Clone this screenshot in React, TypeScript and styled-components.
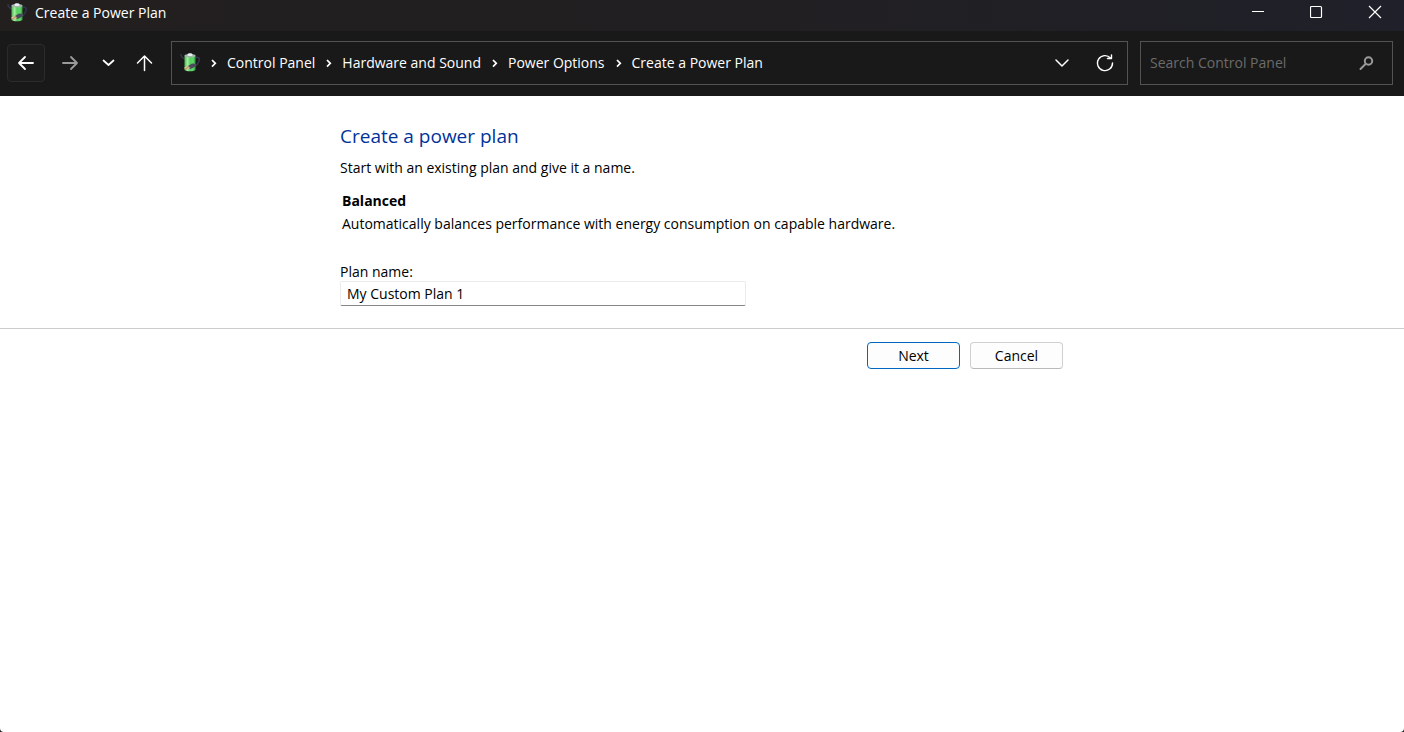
import React, { useState } from "react";
import styled, { createGlobalStyle } from "styled-components";

const GlobalStyle = createGlobalStyle`
  *, *::before, *::after { box-sizing: border-box; }
  html, body, #root { height: 100%; }
  body {
    margin: 0;
    background: #1b1b1b;
    color: #000000;
    font: 14px/20px "Open Sans", "Noto Sans", sans-serif;
  }
  button, input { font: inherit; color: inherit; }
`;

const Window = styled.div`
  display: flex;
  flex-direction: column;
  min-height: 100%;
  border-radius: 0 0 4px 4px;
  background: #ffffff;
`;

const TitleBar = styled.header`
  display: flex;
  justify-content: space-between;
  height: 31px;
  background: linear-gradient(90deg, #231f1f 0%, #211f21 50%, #1f2029 100%);
  color: #ffffff;
`;

const WindowTitle = styled.div`
  display: flex;
  align-items: center;
  gap: 8px;
  height: 26px;
  padding-left: 7px;
`;

const WindowControls = styled.div`
  display: flex;
`;

const CaptionButton = styled.button`
  display: flex;
  justify-content: center;
  width: 58px;
  height: 31px;
  padding: 5px 0 0;
  border: 0;
  background: transparent;
`;

const Toolbar = styled.div`
  display: flex;
  align-items: center;
  height: 65px;
  padding: 0 11px 2px 7px;
  background: #191919;
  color: #ffffff;
`;

const NavButtons = styled.nav`
  display: flex;
  align-items: center;
  width: 164px;
  flex: none;
`;

const NavButton = styled.button<{ $width: number; $framed?: boolean; $dim?: boolean }>`
  display: flex;
  align-items: center;
  justify-content: center;
  width: ${(p) => p.$width}px;
  height: 38px;
  padding: 0;
  border: 1px solid ${(p) => (p.$framed ? "#2b2b2b" : "transparent")};
  border-radius: 4px;
  background: ${(p) => (p.$framed ? "#1c1c1c" : "transparent")};
  color: ${(p) => (p.$dim ? "#9a9a9a" : "#ffffff")};
`;

const AddressBar = styled.div`
  display: flex;
  flex: 1;
  align-items: center;
  min-width: 0;
  height: 44px;
  padding: 0 1px 0 8px;
  border: 1px solid #535353;
`;

const Crumbs = styled.ol`
  display: flex;
  flex: 1;
  align-items: center;
  margin: 0;
  padding: 0;
  list-style: none;
  white-space: nowrap;
`;

const Crumb = styled.li`
  display: flex;
  align-items: center;
`;

const CrumbLink = styled.a`
  color: #ffffff;
  text-decoration: none;
`;

const CrumbArrow = styled.svg`
  width: 27px;
  height: 12px;
  flex: none;
`;

const AddressButton = styled.button`
  display: flex;
  align-items: center;
  justify-content: center;
  width: 43px;
  height: 42px;
  padding: 0;
  border: 0;
  background: transparent;
`;

const SearchBox = styled.label`
  display: flex;
  align-items: center;
  width: 253px;
  height: 44px;
  margin-left: 12px;
  padding: 0 18px 0 9px;
  border: 1px solid #535353;
  color: #9a9a9a;
`;

const SearchInput = styled.input`
  flex: 1;
  min-width: 0;
  padding: 0;
  border: 0;
  outline: 0;
  background: transparent;
  color: #ffffff;
  &::placeholder { color: #6b6b6b; opacity: 1; }
`;

const Column = styled.div`
  width: 100%;
  max-width: 724px;
  margin: 0 auto;
`;

const PlanForm = styled.form`
  display: flex;
  flex-direction: column;
  flex: 1;
`;

const FormBody = styled.section`
  padding: 28px 0 22px;
  border-bottom: 1px solid #cccccc;
`;

const Heading = styled.h1`
  margin: 0 0 10px;
  color: #003399;
  font-size: 19px;
  font-weight: 400;
  line-height: 24px;
`;

const Intro = styled.p`
  margin: 0;
`;

const PlanSummary = styled.div`
  margin: 13px 0 28px;
  padding-left: 2px;
`;

const PlanTitle = styled.h2`
  margin: 0 0 3px;
  font-size: 14px;
  font-weight: 700;
  line-height: 20px;
`;

const FieldLabel = styled.label`
  display: block;
  line-height: 19px;
`;

const NameInput = styled.input`
  display: block;
  width: 406px;
  max-width: 100%;
  height: 25px;
  padding: 0 6px;
  border: 1px solid #ebebeb;
  border-bottom-color: #868686;
  border-radius: 2px;
  outline: 0;
  background: #ffffff;
`;

const Actions = styled.div`
  display: flex;
  justify-content: flex-end;
  gap: 10px;
  padding: 13px 1px;
`;

const ActionButton = styled.button<{ $primary?: boolean }>`
  width: 93px;
  height: 27px;
  padding: 0;
  border: 1px solid ${(p) => (p.$primary ? "#0067c0" : "#d0d0d0")};
  border-bottom-color: ${(p) => (p.$primary ? "#0067c0" : "#bababa")};
  border-radius: 4px;
  background: #fdfdfd;
`;

function BatteryIcon({ id }: { id: string }) {
  return (
    <svg width="20" height="20" viewBox="0 0 20 20" fill="none" aria-hidden="true">
      <defs>
        <linearGradient id={id} x1="4" x2="16" y1="0" y2="0" gradientUnits="userSpaceOnUse">
          <stop offset="0" stopColor="#3fae48" />
          <stop offset="0.3" stopColor="#a4eea0" />
          <stop offset="0.5" stopColor="#55cf5e" />
          <stop offset="0.75" stopColor="#5fd868" />
          <stop offset="1" stopColor="#2a8c38" />
        </linearGradient>
      </defs>
      <path d="M1 1c0 3 1 4 4 5M15 5c3-2 5 0 4 3s-2 4-4 5" stroke="#34344e" strokeWidth="1.500" />
      <path d="M4.500 2.500h11v14.500c-2 1.700-9 1.700-11 0z" fill={`url(#${id})`} />
      <ellipse cx="10" cy="2.800" rx="5.500" ry="1.700" fill="#a3b5ac" />
      <path d="M7.500 1.500C7.500-.2 12.500-.2 12.500 1.500v1c-1 .8-4 .8-5 0z" fill="#e8eff4" />
      <path d="M8 13l4-2.500 4.500.5-2 3-4 2-3-1z" fill="#4a4a5a" />
      <path d="M4 15l4-2.500 2.500 2.500-4 2z" fill="#b99d72" />
      <path d="M4.500 15l3-1.500M6.500 16.500l2.500-1.500" stroke="#efd9b0" strokeWidth="0.800" />
    </svg>
  );
}

function ArrowIcon({ path, width = 1.5 }: { path: string; width?: number }) {
  return (
    <svg width="18" height="18" viewBox="0 0 18 18" fill="none" stroke="currentColor" strokeWidth={width} strokeLinecap="round" strokeLinejoin="round" aria-hidden="true">
      <path d={path} />
    </svg>
  );
}

function Separator() {
  return (
    <CrumbArrow viewBox="0 0 27 12" fill="none" stroke="#ffffff" strokeWidth="1.700" aria-hidden="true">
      <path d="M12 3l3.300 3.300-3.300 3.300" />
    </CrumbArrow>
  );
}

const trail = ["Control Panel", "Hardware and Sound", "Power Options", "Create a Power Plan"];

export default function App() {
  const [name, setName] = useState("My Custom Plan 1");

  return (
    <Window>
      <GlobalStyle />
      <TitleBar>
        <WindowTitle>
          <BatteryIcon id="cell-title" />
          <span>Create a Power Plan</span>
        </WindowTitle>
        <WindowControls>
          <CaptionButton type="button" aria-label="Minimize">
            <svg width="14" height="14" viewBox="0 0 14 14" aria-hidden="true">
              <path d="M0 6.500h12" stroke="#fff" />
            </svg>
          </CaptionButton>
          <CaptionButton type="button" aria-label="Maximize">
            <svg width="14" height="14" viewBox="0 0 14 14" fill="none" aria-hidden="true">
              <rect x="0.500" y="1.500" width="11" height="11" rx="1" stroke="#fff" strokeWidth="1.200" />
            </svg>
          </CaptionButton>
          <CaptionButton type="button" aria-label="Close">
            <svg width="14" height="14" viewBox="0 0 14 14" aria-hidden="true">
              <path d="M1 1l12 12M13 1L1 13" stroke="#fff" strokeWidth="1.200" />
            </svg>
          </CaptionButton>
        </WindowControls>
      </TitleBar>

      <Toolbar>
        <NavButtons aria-label="History">
          <NavButton type="button" $width={38} $framed aria-label="Back">
            <ArrowIcon width={1.8} path="M16 9H2M8 3L2 9l6 6" />
          </NavButton>
          <NavButton type="button" $width={50} $dim aria-label="Forward">
            <ArrowIcon width={1.8} path="M2 9h14M10 3l6 6-6 6" />
          </NavButton>
          <NavButton type="button" $width={26} aria-label="Recent locations">
            <ArrowIcon width={1.7} path="M4.500 6.500l5 4.500 5-4.500" />
          </NavButton>
          <NavButton type="button" $width={46} aria-label="Up">
            <ArrowIcon path="M9.500 16.500V2M2.500 9l7-7 7 7" />
          </NavButton>
        </NavButtons>
        <AddressBar>
          <BatteryIcon id="cell-address" />
          <Crumbs>
            {trail.map((item) => (
              <Crumb key={item}>
                <Separator />
                <CrumbLink href="#">{item}</CrumbLink>
              </Crumb>
            ))}
          </Crumbs>
          <AddressButton type="button" aria-label="Previous locations">
            <ArrowIcon path="M3 6l6 6 6-6" />
          </AddressButton>
          <AddressButton type="button" aria-label="Refresh">
            <ArrowIcon width={1.4} path="M14.500 4A7.500 7.500 0 1 0 16.500 9M11.500 4.500H15.500V1" />
          </AddressButton>
        </AddressBar>
        <SearchBox>
          <SearchInput type="text" placeholder="Search Control Panel" aria-label="Search Control Panel" />
          <svg width="16" height="16" viewBox="0 0 16 16" fill="none" stroke="currentColor" strokeWidth="2" aria-hidden="true">
            <circle cx="10.500" cy="6" r="3.700" />
            <path d="M7.500 9l-5 5" strokeLinecap="round" />
          </svg>
        </SearchBox>
      </Toolbar>

      <PlanForm onSubmit={(e) => e.preventDefault()}>
        <FormBody>
          <Column>
            <Heading>Create a power plan</Heading>
            <Intro>Start with an existing plan and give it a name.</Intro>
            <PlanSummary>
              <PlanTitle>Balanced</PlanTitle>
              <Intro>Automatically balances performance with energy consumption on capable hardware.</Intro>
            </PlanSummary>
            <FieldLabel htmlFor="plan-name">Plan name:</FieldLabel>
            <NameInput id="plan-name" type="text" value={name} onChange={(e) => setName(e.target.value)} />
          </Column>
        </FormBody>
        <Column>
          <Actions>
            <ActionButton type="submit" $primary>Next</ActionButton>
            <ActionButton type="button">Cancel</ActionButton>
          </Actions>
        </Column>
      </PlanForm>
    </Window>
  );
}
